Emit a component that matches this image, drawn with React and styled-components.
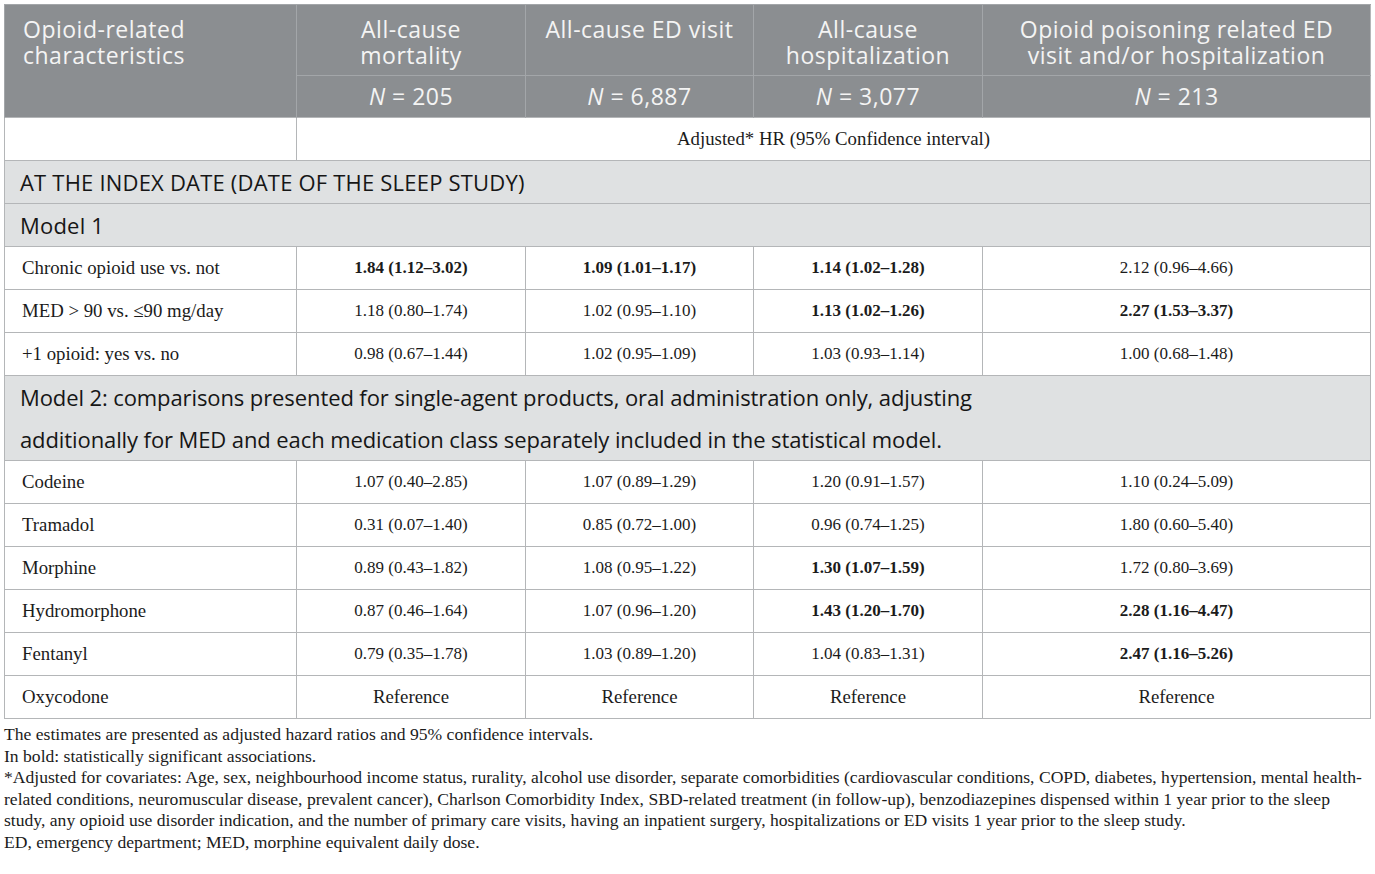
import React from 'react';
import styled, { createGlobalStyle } from 'styled-components';

const GlobalStyle = createGlobalStyle`
  html, body {
    margin: 0;
    padding: 0;
    background: #ffffff;
  }
`;

const colors = {
  head: '#8b8e91',
  headLine: '#a3a6a9',
  section: '#dfe1e2',
  border: '#b4b6b8',
  text: '#1b1b1b',
};

const Page = styled.div`
  padding: 4px 5px 0 4px;
  width: 1366px;
`;

const Table = styled.table`
  width: 1366px;
  border-collapse: collapse;
  table-layout: fixed;
  border: 1px solid ${colors.border};
`;

const HeadCell = styled.th`
  background: ${colors.head};
  color: #f4f4f4;
  font-family: 'Open Sans', 'Liberation Sans', sans-serif;
  font-weight: 400;
  font-size: 23px;
  letter-spacing: 0.5px;
  line-height: 26px;
  text-align: ${(p) => (p.$left ? 'left' : 'center')};
  vertical-align: top;
  padding: ${(p) => (p.$count ? '7px 10px 7px' : '11px 10px 7px')};
  padding-left: ${(p) => (p.$left ? '18px' : '10px')};
  border-left: 1px solid ${colors.headLine};
  border-top: 1px solid ${colors.headLine};
  height: ${(p) => (p.$count ? '27px' : '52px')};
`;

const Italic = styled.i`
  font-style: italic;
`;

const Cell = styled.td`
  font-family: 'Liberation Serif', 'Times New Roman', serif;
  font-size: ${(p) => (p.$words ? '18.8px' : '17px')};
  color: ${colors.text};
  height: 42px;
  padding: 0 10px;
  padding-left: ${(p) => (p.$left ? '17px' : '10px')};
  text-align: ${(p) => (p.$left ? 'left' : 'center')};
  font-weight: ${(p) => (p.$bold ? 700 : 400)};
  border: 1px solid ${colors.border};
  vertical-align: middle;
`;

const SectionCell = styled.td`
  background: ${colors.section};
  font-family: 'Open Sans', 'Liberation Sans', sans-serif;
  font-size: 22px;
  letter-spacing: 0.2px;
  color: #161616;
  line-height: 42px;
  padding: 0 15px;
  border: 1px solid ${colors.border};
`;

const LongLabel = styled.span`
  display: inline-block;
  font-size: 22px;
  letter-spacing: -0.1px;
  line-height: 42px;
`;

const Notes = styled.div`
  font-family: 'Liberation Serif', 'Times New Roman', serif;
  font-size: 17.6px;
  line-height: 21.6px;
  color: ${colors.text};
  padding-top: 5px;
`;

const NoteLine = styled.div`
  white-space: nowrap;
`;

const columns = [
  { title: ['All-cause', 'mortality'], n: '205' },
  { title: ['All-cause ED visit'], n: '6,887' },
  { title: ['All-cause', 'hospitalization'], n: '3,077' },
  { title: ['Opioid poisoning related ED', 'visit and/or hospitalization'], n: '213' },
];

const model1 = [
  {
    label: 'Chronic opioid use vs. not',
    values: [
      ['1.84 (1.12–3.02)', true],
      ['1.09 (1.01–1.17)', true],
      ['1.14 (1.02–1.28)', true],
      ['2.12 (0.96–4.66)', false],
    ],
  },
  {
    label: 'MED > 90 vs. ≤90 mg/day',
    values: [
      ['1.18 (0.80–1.74)', false],
      ['1.02 (0.95–1.10)', false],
      ['1.13 (1.02–1.26)', true],
      ['2.27 (1.53–3.37)', true],
    ],
  },
  {
    label: '+1 opioid: yes vs. no',
    values: [
      ['0.98 (0.67–1.44)', false],
      ['1.02 (0.95–1.09)', false],
      ['1.03 (0.93–1.14)', false],
      ['1.00 (0.68–1.48)', false],
    ],
  },
];

const model2 = [
  {
    label: 'Codeine',
    values: [
      ['1.07 (0.40–2.85)', false],
      ['1.07 (0.89–1.29)', false],
      ['1.20 (0.91–1.57)', false],
      ['1.10 (0.24–5.09)', false],
    ],
  },
  {
    label: 'Tramadol',
    values: [
      ['0.31 (0.07–1.40)', false],
      ['0.85 (0.72–1.00)', false],
      ['0.96 (0.74–1.25)', false],
      ['1.80 (0.60–5.40)', false],
    ],
  },
  {
    label: 'Morphine',
    values: [
      ['0.89 (0.43–1.82)', false],
      ['1.08 (0.95–1.22)', false],
      ['1.30 (1.07–1.59)', true],
      ['1.72 (0.80–3.69)', false],
    ],
  },
  {
    label: 'Hydromorphone',
    values: [
      ['0.87 (0.46–1.64)', false],
      ['1.07 (0.96–1.20)', false],
      ['1.43 (1.20–1.70)', true],
      ['2.28 (1.16–4.47)', true],
    ],
  },
  {
    label: 'Fentanyl',
    values: [
      ['0.79 (0.35–1.78)', false],
      ['1.03 (0.89–1.20)', false],
      ['1.04 (0.83–1.31)', false],
      ['2.47 (1.16–5.26)', true],
    ],
  },
];

const referenceRow = {
  label: 'Oxycodone',
  values: [
    ['Reference', false],
    ['Reference', false],
    ['Reference', false],
    ['Reference', false],
  ],
};

const DataRow = ({ row, words }) => (
  <tr>
    <Cell $left $words>
      {row.label}
    </Cell>
    {row.values.map(([text, bold], i) => (
      <Cell key={i} $bold={bold} $words={words}>
        {text}
      </Cell>
    ))}
  </tr>
);

const App = () => (
  <Page>
    <GlobalStyle />
    <Table>
      <colgroup>
        <col style={{ width: 292 }} />
        <col style={{ width: 229 }} />
        <col style={{ width: 228 }} />
        <col style={{ width: 229 }} />
        <col style={{ width: 388 }} />
      </colgroup>
      <thead>
        <tr>
          <HeadCell $left rowSpan={2}>
            Opioid-related
            <br />
            characteristics
          </HeadCell>
          {columns.map((c) => (
            <HeadCell key={c.n}>
              {c.title.map((t, i) => (
                <React.Fragment key={t}>
                  {i > 0 && <br />}
                  {t}
                </React.Fragment>
              ))}
            </HeadCell>
          ))}
        </tr>
        <tr>
          {columns.map((c) => (
            <HeadCell key={c.n} $count>
              <Italic>N</Italic> = {c.n}
            </HeadCell>
          ))}
        </tr>
      </thead>
      <tbody>
        <tr>
          <Cell />
          <Cell colSpan={4} $words>
            Adjusted* HR (95% Confidence interval)
          </Cell>
        </tr>
        <tr>
          <SectionCell colSpan={5}>AT THE INDEX DATE (DATE OF THE SLEEP STUDY)</SectionCell>
        </tr>
        <tr>
          <SectionCell colSpan={5}>Model 1</SectionCell>
        </tr>
        {model1.map((row) => (
          <DataRow key={row.label} row={row} />
        ))}
        <tr>
          <SectionCell colSpan={5}>
            <LongLabel>
              Model 2: comparisons presented for single-agent products, oral administration only, adjusting
              <br />
              additionally for MED and each medication class separately included in the statistical model.
            </LongLabel>
          </SectionCell>
        </tr>
        {model2.map((row) => (
          <DataRow key={row.label} row={row} />
        ))}
        <DataRow row={referenceRow} words />
      </tbody>
    </Table>
    <Notes>
      <NoteLine>The estimates are presented as adjusted hazard ratios and 95% confidence intervals.</NoteLine>
      <NoteLine>In bold: statistically significant associations.</NoteLine>
      <NoteLine>
        *Adjusted for covariates: Age, sex, neighbourhood income status, rurality, alcohol use disorder, separate
        comorbidities (cardiovascular conditions, COPD, diabetes, hypertension, mental health-
      </NoteLine>
      <NoteLine>
        related conditions, neuromuscular disease, prevalent cancer), Charlson Comorbidity Index, SBD-related
        treatment (in follow-up), benzodiazepines dispensed within 1 year prior to the sleep
      </NoteLine>
      <NoteLine>
        study, any opioid use disorder indication, and the number of primary care visits, having an inpatient
        surgery, hospitalizations or ED visits 1 year prior to the sleep study.
      </NoteLine>
      <NoteLine>ED, emergency department; MED, morphine equivalent daily dose.</NoteLine>
    </Notes>
  </Page>
);

export default App;
